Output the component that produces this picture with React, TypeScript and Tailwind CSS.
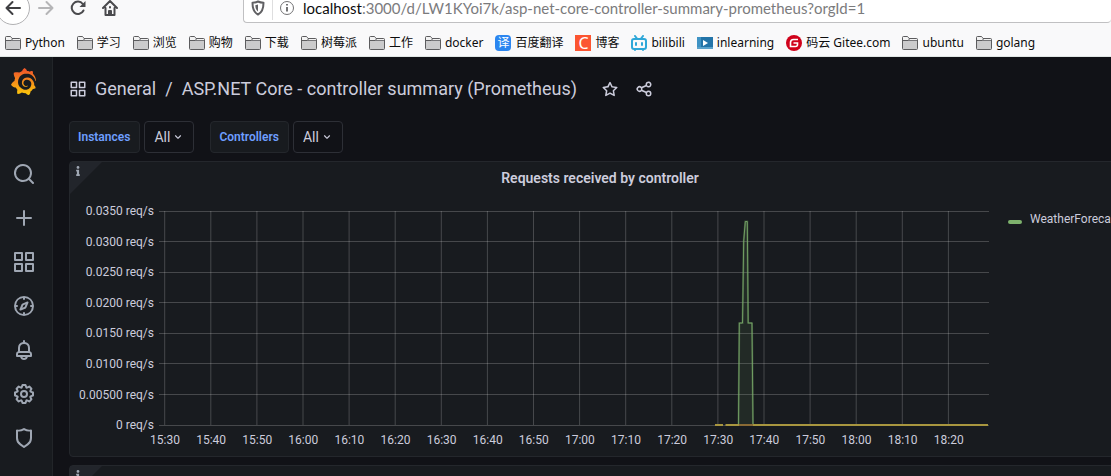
import type { ReactNode } from "react";
import { FaInfo } from "react-icons/fa";
import { SiGrafana } from "react-icons/si";

const icons = {
  apps: "M10,13H3a1,1,0,0,0-1,1v7a1,1,0,0,0,1,1h7a1,1,0,0,0,1-1V14A1,1,0,0,0,10,13ZM9,20H4V15H9ZM21,2H14a1,1,0,0,0-1,1v7a1,1,0,0,0,1,1h7a1,1,0,0,0,1-1V3A1,1,0,0,0,21,2ZM20,9H15V4h5Zm1,4H14a1,1,0,0,0-1,1v7a1,1,0,0,0,1,1h7a1,1,0,0,0,1-1V14A1,1,0,0,0,21,13Zm-1,7H15V15h5ZM10,2H3A1,1,0,0,0,2,3v7a1,1,0,0,0,1,1h7a1,1,0,0,0,1-1V3A1,1,0,0,0,10,2ZM9,9H4V4H9Z",
  search: "M21.71,20.29,18,16.61A9,9,0,1,0,16.61,18l3.68,3.68a1,1,0,0,0,1.42,0A1,1,0,0,0,21.71,20.29ZM11,18a7,7,0,1,1,7-7A7,7,0,0,1,11,18Z",
  plus: "M19,11H13V5a1,1,0,0,0-2,0v6H5a1,1,0,0,0,0,2h6v6a1,1,0,0,0,2,0V13h6a1,1,0,0,0,0-2Z",
  star: "M22,9.67A1,1,0,0,0,21.14,9l-5.69-.83L12.9,3a1,1,0,0,0-1.8,0L8.55,8.16,2.86,9a1,1,0,0,0-.81.68,1,1,0,0,0,.25,1l4.13,4-1,5.68A1,1,0,0,0,6.9,21.44L12,18.77l5.1,2.67a.93.93,0,0,0,.46.12,1,1,0,0,0,.59-.19,1,1,0,0,0,.4-1l-1-5.68,4.13-4A1,1,0,0,0,22,9.67Zm-6.15,4a1,1,0,0,0-.29.88l.72,4.2-3.76-2a1.06,1.06,0,0,0-.94,0l-3.76,2,.72-4.2a1,1,0,0,0-.29-.88l-3-3,4.21-.61a1,1,0,0,0,.76-.55L12,5.7l1.88,3.82a1,1,0,0,0,.76.55l4.21.61Z",
  share: "M18,14a4,4,0,0,0-3.08,1.48l-5.1-2.35a3.64,3.64,0,0,0,0-2.26l5.1-2.35A4,4,0,1,0,14,6a4.17,4.17,0,0,0,.07.71L8.79,9.14a4,4,0,1,0,0,5.72l5.28,2.43A4.17,4.17,0,0,0,14,18a4,4,0,1,0,4-4ZM18,4a2,2,0,1,1-2,2A2,2,0,0,1,18,4ZM6,14a2,2,0,1,1,2-2A2,2,0,0,1,6,14Zm12,6a2,2,0,1,1,2-2A2,2,0,0,1,18,20Z",
  bell: "M18,13.18V10a6,6,0,0,0-5-5.91V3a1,1,0,0,0-2,0V4.09A6,6,0,0,0,6,10v3.18A3,3,0,0,0,4,16v2a1,1,0,0,0,1,1H8.14a4,4,0,0,0,7.72,0H19a1,1,0,0,0,1-1V16A3,3,0,0,0,18,13.18ZM8,10a4,4,0,0,1,8,0v3H8Zm4,10a2,2,0,0,1-1.72-1h3.44A2,2,0,0,1,12,20Zm6-3H6V16a1,1,0,0,1,1-1H17a1,1,0,0,1,1,1Z",
  compass: "M12,2A10,10,0,1,0,22,12,10,10,0,0,0,12,2Zm1,17.93V19a1,1,0,0,0-2,0v.93A8,8,0,0,1,4.07,13H5a1,1,0,0,0,0-2H4.07A8,8,0,0,1,11,4.07V5a1,1,0,0,0,2,0V4.07A8,8,0,0,1,19.93,11H19a1,1,0,0,0,0,2h.93A8,8,0,0,1,13,19.93ZM15.14,7.55l-5,2.12a1,1,0,0,0-.52.52l-2.12,5a1,1,0,0,0,.21,1.1,1,1,0,0,0,.7.3.93.93,0,0,0,.4-.09l5-2.12a1,1,0,0,0,.52-.52l2.12-5a1,1,0,0,0-1.31-1.31Zm-2.49,5.1-2.28,1,1-2.28,2.28-1Z",
  shield: "M19.63,3.65a1,1,0,0,0-.84-.2,8,8,0,0,1-6.22-1.27,1,1,0,0,0-1.14,0A8,8,0,0,1,5.21,3.45a1,1,0,0,0-.84.2A1,1,0,0,0,4,4.43v7.45a9,9,0,0,0,3.77,7.33l3.65,2.6a1,1,0,0,0,1.16,0l3.65-2.6A9,9,0,0,0,20,11.88V4.43A1,1,0,0,0,19.63,3.65ZM18,11.88a7,7,0,0,1-2.93,5.7L12,19.77,8.93,17.58A7,7,0,0,1,6,11.88V5.58a10,10,0,0,0,6-1.39,10,10,0,0,0,6,1.39Z",
  cog: "M21.32,9.55l-1.89-.63.89-1.78A1,1,0,0,0,20.13,6L18,3.87a1,1,0,0,0-1.15-.19l-1.78.89-.63-1.89A1,1,0,0,0,13.5,2h-3a1,1,0,0,0-.95.68L8.92,4.57,7.14,3.68A1,1,0,0,0,6,3.87L3.87,6a1,1,0,0,0-.19,1.15l.89,1.78-1.89.63A1,1,0,0,0,2,10.5v3a1,1,0,0,0,.68.95l1.89.63-.89,1.78A1,1,0,0,0,3.87,18L6,20.13a1,1,0,0,0,1.15.19l1.78-.89.63,1.89a1,1,0,0,0,.95.68h3a1,1,0,0,0,.95-.68l.63-1.89,1.78.89A1,1,0,0,0,18,20.13L20.13,18a1,1,0,0,0,.19-1.15l-.89-1.78,1.89-.63A1,1,0,0,0,22,13.5v-3A1,1,0,0,0,21.32,9.55ZM20,12.78l-1.2.4A2,2,0,0,0,17.64,16l.57,1.14-1.1,1.1L16,17.64a2,2,0,0,0-2.79,1.16l-.4,1.2H11.22l-.4-1.2A2,2,0,0,0,8,17.64l-1.14.57-1.1-1.1L6.36,16A2,2,0,0,0,5.2,13.18L4,12.78V11.22l1.2-.4A2,2,0,0,0,6.36,8L5.79,6.89l1.1-1.1L8,6.36A2,2,0,0,0,10.82,5.2l.4-1.2h1.56l.4,1.2A2,2,0,0,0,16,6.36l1.14-.57,1.1,1.1L17.64,8a2,2,0,0,0,1.16,2.79l1.2.4ZM12,8a4,4,0,1,0,4,4A4,4,0,0,0,12,8Zm0,6a2,2,0,1,1,2-2A2,2,0,0,1,12,14Z",
  angleDown: "M17,9.17a1,1,0,0,0-1.41,0L12,12.71,8.46,9.17a1,1,0,0,0-1.41,0,1,1,0,0,0,0,1.42l4.24,4.24a1,1,0,0,0,1.42,0L17,10.59A1,1,0,0,0,17,9.17Z",
};

type IconName = keyof typeof icons;

function Icon({ name, className }: { name: IconName; className: string }) {
  return (
    <svg viewBox="0 0 24 24" fill="currentColor" className={className} aria-hidden="true">
      <path d={icons[name]} />
    </svg>
  );
}

function FolderIcon() {
  return (
    <svg viewBox="0 0 16 16" className="h-4 w-4">
      <path d="M.5 13.5v-11q0-1 1-1h4l1.5 2h7.5q1 0 1 1v9q0 1-1 1h-13q-1 0-1-1z" fill="#cbcbcc" stroke="#5c5c5e" />
      <path d="M1 2h4.300l1.500 2h8.200v1.500H1z" fill="#f3f3f3" />
      <path d="M1 5.500h5l1.500-1.500" fill="none" stroke="#5c5c5e" />
      <path d="M6 5.500h9" stroke="#77777a" />
    </svg>
  );
}

function BilibiliIcon() {
  return (
    <svg viewBox="0 0 16 16" className="h-4 w-4" fill="none" stroke="#2ea7d8" strokeWidth="2" strokeLinecap="round">
      <rect x="1" y="4" width="14" height="10" rx="2" />
      <path d="M4 1l2 2.500M12 1l-2 2.500M5 8v2M11 8v2M4 15v0M12 15v0" />
    </svg>
  );
}

function VideoIcon() {
  return (
    <svg viewBox="0 0 16 16" className="h-4 w-4">
      <path d="M0 2h16v12H0z" fill="#2374a8" />
      <path d="M0 2h4v12H0z" fill="#3f93c4" />
      <path d="M0 12h16v2H0z" fill="#5aa2cb" />
      <path d="M6 5l5 3-5 3z" fill="#fff" />
    </svg>
  );
}

function GiteeIcon() {
  return (
    <svg viewBox="0 0 16 16" className="h-4 w-4">
      <circle cx="8" cy="8" r="8" fill="#d0021b" />
      <path d="M12 4.500H7.500Q4.500 4.500 4.500 7.500v4h5q2 0 2-2V8H7.500" fill="none" stroke="#fff" strokeWidth="1.600" />
    </svg>
  );
}

const bookmarks: { label: string; icon?: ReactNode }[] = [
  { label: "Python" },
  { label: "学习" },
  { label: "浏览" },
  { label: "购物" },
  { label: "下载" },
  { label: "树莓派" },
  { label: "工作" },
  { label: "docker" },
  {
    label: "百度翻译",
    icon: <span className="flex h-4 w-4 items-center justify-center rounded-sm bg-[#2b86f0] text-xs text-white">译</span>,
  },
  {
    label: "博客",
    icon: <span className="flex h-4 w-4 items-center justify-center bg-[#fc5531] text-base text-white">C</span>,
  },
  { label: "bilibili", icon: <BilibiliIcon /> },
  { label: "inlearning", icon: <VideoIcon /> },
  { label: "码云 Gitee.com", icon: <GiteeIcon /> },
  { label: "ubuntu" },
  { label: "golang" },
];

function BrowserBar() {
  return (
    <header className="border-b border-[#e0e6e4] bg-[#f9f9fa] font-['Noto_Sans','Noto_Sans_CJK_SC',sans-serif]">
      {/* Navigation row, its top edge runs above the window */}
      <div className="-mt-3 flex h-10 items-center">
        <button aria-label="Back" className="-ml-1 flex h-[34px] w-[34px] shrink-0 items-center justify-center rounded-full border border-[#b1b1b3] bg-white">
          <svg viewBox="0 0 16 16" className="h-4 w-4" fill="none" stroke="#3f3f42" strokeWidth="2" strokeLinecap="round" strokeLinejoin="round">
            <path d="M15 8H1.500M7.500 2l-6 6 6 6" />
          </svg>
        </button>
        <div className="flex items-center gap-4 pl-2">
          <button aria-label="Forward" disabled>
            <svg viewBox="0 0 16 16" className="h-4 w-4" fill="none" stroke="#b5b5b7" strokeWidth="2" strokeLinecap="round" strokeLinejoin="round">
              <path d="M1 8h13.500M8.500 2l6 6-6 6" />
            </svg>
          </button>
          <button aria-label="Reload">
            <svg viewBox="0 0 16 16" className="h-4 w-4" fill="none" stroke="#4a4a4d" strokeWidth="2" strokeLinecap="round">
              <path d="M13.500 10.500A6.200 6.200 0 1 1 12.800 4" />
              <path d="M15.500 1v6h-6z" fill="#4a4a4d" stroke="none" />
            </svg>
          </button>
          <button aria-label="Home">
            <svg viewBox="0 0 16 16" className="h-4 w-4" fill="none" stroke="#4a4a4d" strokeWidth="2" strokeLinecap="round" strokeLinejoin="round">
              <path d="M1 8l7-7 7 7M3.500 8v7h9V8" />
              <path d="M7 15v-4h2v4M8 7v.500" />
            </svg>
          </button>
        </div>
        <div className="ml-[125px] flex h-[30px] flex-1 items-center rounded-sm border border-r-0 border-[#c0c0c2] bg-white">
          <svg viewBox="0 0 16 16" className="ml-[6px] h-4 w-4" fill="none" stroke="#606063" strokeWidth="2" strokeLinejoin="round">
            <path d="M8 1.500c2 1 4 1.200 5.500 1.200 0 6-1 9.500-5.500 11.800C3.500 12.200 2.500 8.700 2.500 2.700 4 2.700 6 2.500 8 1.500z" />
            <path d="M8 4.500v7c-2-1.500-2.500-3.500-2.700-6.300z" fill="#606063" stroke="none" />
          </svg>
          <span className="mx-[6px] h-6 w-px bg-[#dededf]" />
          <svg viewBox="0 0 16 16" className="h-4 w-4" fill="none" stroke="#737375">
            <circle cx="8" cy="8" r="6.500" />
            <path d="M8 7v4.500M8 4v1.500" strokeWidth="2" />
          </svg>
          <div role="textbox" aria-label="Address" className="ml-2 whitespace-nowrap font-[Lato,sans-serif] text-[15px] leading-4 text-[#7b7b7d]">
            <span className="text-[#0c0c0d]">localhost</span>
            :3000/d/LW1KYoi7k/asp-net-core-controller-summary-prometheus?orgId=1
          </div>
        </div>
      </div>

      {/* Bookmarks */}
      <nav className="flex h-7 items-center gap-3 pl-[5px] pt-px text-xs text-[#0c0c0d]">
        {bookmarks.map((bookmark) => (
          <a key={bookmark.label} href="#" className="flex shrink-0 items-center gap-1 whitespace-nowrap">
            {bookmark.icon ?? <FolderIcon />}
            {bookmark.label}
          </a>
        ))}
      </nav>
    </header>
  );
}

const menuItems: { name: IconName; label: string }[] = [
  { name: "search", label: "Search" },
  { name: "plus", label: "Create" },
  { name: "apps", label: "Dashboards" },
  { name: "compass", label: "Explore" },
  { name: "bell", label: "Alerting" },
  { name: "cog", label: "Configuration" },
  { name: "shield", label: "Server Admin" },
];

function Sidebar() {
  return (
    <aside className="flex w-[53px] shrink-0 flex-col border-r border-[#222529] bg-[#181b1f] text-[#9fa7b3]">
      <a href="#" aria-label="Home" className="ml-[10px] mt-[11px] h-7">
        <SiGrafana fill="url(#logo)" className="h-[27px] w-[27px]" />
      </a>
      <svg className="h-0 w-0" aria-hidden="true">
        <linearGradient id="logo" x1="0" y1="0" x2="0" y2="1">
          <stop offset="0.1" stopColor="#f05a28" />
          <stop offset="1" stopColor="#fbca0a" />
        </linearGradient>
      </svg>
      <nav className="mt-14 flex flex-col pr-1">
        {menuItems.map((item) => (
          <a key={item.name} href="#" aria-label={item.label} className="flex h-11 items-center justify-center">
            <Icon name={item.name} className="h-6 w-6" />
          </a>
        ))}
      </nav>
    </aside>
  );
}

function Variable({ name }: { name: string }) {
  return (
    <div className="flex gap-1">
      <label htmlFor={name} className="flex h-8 items-center rounded-sm border border-[#24272c] bg-[#181b1f] pl-2 pr-[9px] text-xs font-semibold text-[#6e9fff]">
        {name}
      </label>
      <div className="relative">
        <select id={name} className="h-8 w-[50px] appearance-none rounded-sm border border-[#2d2f36] bg-[#111217] pl-[9px] text-sm">
          <option>All</option>
        </select>
        <Icon name="angleDown" className="pointer-events-none absolute right-[9px] top-[9px] h-[14px] w-[14px]" />
      </div>
    </div>
  );
}

function InfoCorner() {
  return (
    <button aria-label="Panel info" className="absolute left-0 top-0 h-8 w-8 text-[#9fa7b3]">
      <span className="absolute inset-0 bg-[#22252b] [clip-path:polygon(0_0,100%_0,0_100%)]" />
      <FaInfo className="absolute left-[3px] top-1 h-[10px] w-[10px]" />
    </button>
  );
}

const yTicks = [
  { y: 17, label: "0.0350 req/s" },
  { y: 47, label: "0.0300 req/s" },
  { y: 78, label: "0.0250 req/s" },
  { y: 108, label: "0.0200 req/s" },
  { y: 139, label: "0.0150 req/s" },
  { y: 169, label: "0.0100 req/s" },
  { y: 200, label: "0.00500 req/s" },
  { y: 231, label: "0 req/s" },
];

const xTicks = [
  "15:30", "15:40", "15:50", "16:00", "16:10", "16:20", "16:30", "16:40", "16:50",
  "17:00", "17:10", "17:20", "17:30", "17:40", "17:50", "18:00", "18:10", "18:20",
];

const spike = "M660.500 231L661.300 129H664.500L665.700 47L667.300 27.500H669.300L670.200 129H674L675 231";

function RequestsChart() {
  return (
    <svg viewBox="0 0 912 255" className="h-[255px] w-[912px] shrink-0 text-xs" fill="#ccccdc">
      <g stroke="#fff" strokeOpacity="0.2">
        {yTicks.map((tick) => (
          <line key={tick.label} x1="81" x2="911" y1={tick.y + 0.5} y2={tick.y + 0.5} />
        ))}
        {xTicks.map((label, i) => (
          <line key={label} x1={86.700 + i * 46.100} x2={86.700 + i * 46.100} y1="17" y2="231" />
        ))}
      </g>
      {yTicks.map((tick, i) => (
        <text key={tick.label} x="76" y={Math.round(21 + i * 30.6)} textAnchor="end">
          {tick.label}
        </text>
      ))}
      {xTicks.map((label, i) => (
        <text key={label} x={87 + i * 46.100} y="250" textAnchor="middle">
          {label}
        </text>
      ))}
      <path d={spike} fill="#7eb26d" fillOpacity="0.1" />
      <path d={spike} fill="none" stroke="#7eb26d" strokeOpacity="0.3" strokeWidth="2" />
      <path d={spike} fill="none" stroke="#7eb26d" strokeOpacity="0.8" />
      <path d="M637 231H645M647.500 231H910" stroke="#a8963f" strokeWidth="2" />
      <path d="M661 231H675" stroke="#8a6a35" strokeWidth="2" />
    </svg>
  );
}

export default function App() {
  return (
    <div className="flex h-screen flex-col overflow-hidden bg-[#111217] font-[Roboto,sans-serif] text-[#ccccdc]">
      <BrowserBar />
      <div className="flex min-h-0 flex-1">
        <Sidebar />
        <main className="min-w-0 flex-1 overflow-hidden pl-4">
          <div className="flex h-16 items-center">
            <Icon name="apps" className="h-[18px] w-[18px]" />
            <h1 className="ml-2 flex gap-[9px] whitespace-nowrap text-lg">
              <a href="#">General</a>
              <span>/</span>
              <a href="#">ASP.NET Core - controller summary (Prometheus)</a>
            </h1>
            <button aria-label="Mark as favorite" className="ml-6">
              <Icon name="star" className="h-[18px] w-[18px]" />
            </button>
            <button aria-label="Share dashboard" className="ml-4">
              <Icon name="share" className="h-[18px] w-[18px]" />
            </button>
          </div>

          <div className="flex gap-4">
            <Variable name="Instances" />
            <Variable name="Controllers" />
          </div>

          {/* Panels keep going under the right edge */}
          <div className="-mr-5 mt-2 flex flex-col gap-2">
            <section className="relative rounded-sm border border-[#24272c] bg-[#181b1f] pb-[7px]">
              <InfoCorner />
              <h2 className="flex h-8 items-center justify-center text-sm font-semibold">Requests received by controller</h2>
              <div className="flex overflow-hidden pl-2">
                <RequestsChart />
                <button className="ml-[18px] mt-4 flex h-[18px] items-center gap-2 text-xs">
                  <span className="mt-[6px] h-1 w-[14px] rounded-sm bg-[#7eb26d]" />
                  WeatherForecast
                </button>
              </div>
            </section>
            <section className="relative h-[296px] rounded-sm border border-[#24272c] bg-[#181b1f]">
              <InfoCorner />
            </section>
          </div>
        </main>
      </div>
    </div>
  );
}
